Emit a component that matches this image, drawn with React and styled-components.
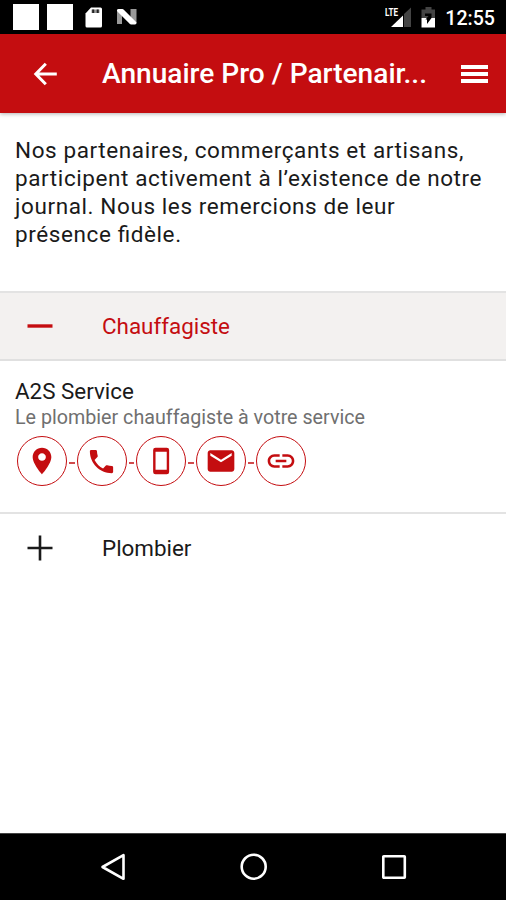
import React from 'react';
import styled, { createGlobalStyle } from 'styled-components';

const RED = '#c40d10';

const contacts = [
  { id: 'place', size: 32, path: 'M12 2C8.13 2 5 5.13 5 9c0 5.25 7 13 7 13s7-7.75 7-13c0-3.87-3.13-7-7-7zm0 9.9c-1.6 0-2.9-1.3-2.9-2.9s1.3-2.9 2.9-2.9 2.9 1.3 2.9 2.9-1.3 2.9-2.9 2.9z' },
  { id: 'call', size: 31, path: 'M6.62 10.79c1.44 2.83 3.76 5.14 6.59 6.59l2.2-2.2c.27-.27.67-.36 1.02-.24 1.12.37 2.33.57 3.57.57.55 0 1 .45 1 1V20c0 .55-.45 1-1 1-9.39 0-17-7.61-17-17 0-.55.45-1 1-1h3.5c.55 0 1 .45 1 1 0 1.25.2 2.45.57 3.57.11.35.03.74-.25 1.02l-2.2 2.2z' },
  { id: 'mobile', size: 32, path: 'M7.9 2h8.4a1.8 1.8 0 0 1 1.8 1.8v16.4a1.8 1.8 0 0 1-1.8 1.8H7.9a1.8 1.8 0 0 1-1.8-1.8V3.8A1.8 1.8 0 0 1 7.9 2zM7.9 5v13.5h8.4V5z' },
  { id: 'mail', size: 32, path: 'M20 4H4c-1.1 0-1.99.9-1.99 2L2 18c0 1.1.9 2 2 2h16c1.1 0 2-.9 2-2V6c0-1.1-.9-2-2-2zm0 4l-8 5-8-5V6l8 5 8-5v2z' },
  { id: 'link', size: 32, path: 'M3.9 12c0-1.71 1.39-3.1 3.1-3.1h4V7H7c-2.76 0-5 2.24-5 5s2.24 5 5 5h4v-1.9H7c-1.71 0-3.1-1.39-3.1-3.1zM8 13h8v-2H8v2zm9-6h-4v1.9h4c1.71 0 3.1 1.39 3.1 3.1s-1.39 3.1-3.1 3.1h-4V17h4c2.76 0 5-2.24 5-5s-2.24-5-5-5z' },
];

const StatusBar = () => (
  <Status>
    <Notifications>
      <Square />
      <Square />
      <svg width="18" height="21" viewBox="0 0 18 21">
        <path d="M6 .5h9.5a1.5 1.5 0 0 1 1.5 1.5v17a1.5 1.5 0 0 1-1.5 1.5H2A1.5 1.5 0 0 1 .5 19V6.5z" fill="#fff" />
        <path d="M6.5 2.5h8V6h-8z" fill="#999" />
        <path d="M8.2 2.5V6M12.7 2.5V6" stroke="#222" strokeWidth="2" />
      </svg>
      <svg width="23" height="18" viewBox="0 0 23 18">
        <path d="M2 1.5h5V16H2zM15.5 1h6v14h-6z" fill="#999" />
        <path d="M3.5 2.5h4L20 15h-4z" fill="#fff" stroke="#fff" strokeWidth="3" strokeLinejoin="round" />
      </svg>
    </Notifications>
    <System>
      <svg width="27" height="22" viewBox="0 0 27 22">
        <path d="M19 8l7-6.500V21h-7z" fill="#444" />
        <path d="M6 21L18 9.5V21z" fill="#fff" />
        <text x="0" y="9.5" textLength="13" lengthAdjust="spacingAndGlyphs" fill="#fff" fontSize="11.5" fontWeight="700">LTE</text>
      </svg>
      <svg width="15" height="21" viewBox="0 0 15 21">
        <path d="M4.5 0h6v2.5H14V11H.5V2.5h4z" fill="#444" />
        <path d="M.5 11H14v9.5H.5z" fill="#fff" />
        <path d="M4 6.5h6.500V11L6 17v-4.500H4.500L7.500 9H4z" fill="#000" />
      </svg>
      <Clock>12:55</Clock>
    </System>
  </Status>
);

const Category = ({ label, open }) => (
  <CategoryRow $open={open}>
    <svg width="26" height="26" viewBox="0 0 26 26" stroke="currentColor" strokeWidth={open ? 3.4 : 2.6}>
      <path d={open ? 'M.5 13h25' : 'M.5 13h25M13 .5v25'} />
    </svg>
    <span>{label}</span>
  </CategoryRow>
);

const App = () => (
  <Screen>
    <GlobalStyle />
    <StatusBar />
    <Header>
      <svg width="24" height="24" viewBox="0 0 24 24" fill="none" stroke="#fff" strokeWidth="3">
        <path d="M23.8 12H3M12.8 1.8L2.8 12l10 10.2" />
      </svg>
      <Title>Annuaire Pro / Partenair...</Title>
      <Menu><i /><i /><i /></Menu>
    </Header>
    <Content>
      <Intro>
        Nos partenaires, commerçants et artisans,<br />
        participent activement à l’existence de notre<br />
        journal. Nous les remercions de leur<br />
        présence fidèle.
      </Intro>
      <Category label="Chauffagiste" open />
      <Partner>
        <Name>A2S Service</Name>
        <Tagline>Le plombier chauffagiste à votre service</Tagline>
        <Contacts>
          {contacts.map(({ id, size, path }, index) => (
            <React.Fragment key={id}>
              {index > 0 ? <Dash /> : ''}
              <ContactButton aria-label={id}>
                <svg width={size} height={size} viewBox="0 0 24 24" fill="currentColor">
                  <path d={path} fillRule="evenodd" />
                </svg>
              </ContactButton>
            </React.Fragment>
          ))}
        </Contacts>
      </Partner>
      <Category label="Plombier" />
    </Content>
    <NavBar>
      <svg width="28" height="28" viewBox="0 0 28 28">
        <path d="M3.5 14L24.5 2.2v23.6z" />
      </svg>
      <svg width="28" height="28" viewBox="0 0 28 28">
        <circle cx="13.7" cy="13.7" r="12" />
      </svg>
      <svg width="28" height="28" viewBox="0 0 28 28">
        <rect x="3.3" y="3.3" width="21.5" height="21.5" rx="0.5" />
      </svg>
    </NavBar>
  </Screen>
);

const GlobalStyle = createGlobalStyle`
  body {
    margin: 0;
    font-family: Roboto, sans-serif;
  }
  * {
    box-sizing: border-box;
  }
  svg {
    display: block;
    flex-shrink: 0;
  }
`;

const Screen = styled.div`
  display: flex;
  flex-direction: column;
  width: 506px;
  height: 900px;
  background: #fff;
  color: #1a1a1a;
`;

const Status = styled.div`
  display: flex;
  align-items: center;
  justify-content: space-between;
  height: 34px;
  padding: 0 11px 0 13px;
  background: #000;
`;

const Notifications = styled.div`
  display: flex;
  align-items: center;
  gap: 8px;
  svg {
    margin-left: 4px;
  }
`;

const Square = styled.div`
  width: 26px;
  height: 26px;
  background: #fff;
`;

const System = styled.div`
  display: flex;
  align-items: center;
  gap: 9px;
`;

const Clock = styled.span`
  color: #fff;
  font-size: 19.6px;
  font-weight: 500;
  line-height: 34px;
  padding-top: 3px;
`;

const Header = styled.header`
  position: relative;
  display: flex;
  align-items: center;
  height: 79px;
  padding: 0 18px 0 33px;
  background: ${RED};
  box-shadow: 0 1px 4px rgba(0, 0, 0, 0.3);
`;

const Title = styled.h1`
  flex: 1;
  margin: 0 0 0 45px;
  color: #fff;
  font-size: 28.1px;
  font-weight: 500;
  white-space: nowrap;
`;

const Menu = styled.div`
  display: flex;
  flex-direction: column;
  gap: 3px;
  width: 27px;
  i {
    height: 4px;
    background: #fff;
  }
`;

const Content = styled.main`
  flex: 1;
`;

const Intro = styled.p`
  height: 178px;
  margin: 0;
  padding: 23px 15px 0;
  font-size: 22.5px;
  line-height: 28.1px;
  letter-spacing: 0.6px;
  font-feature-settings: 'liga' 1;
  white-space: nowrap;
`;

const CategoryRow = styled.div`
  display: flex;
  align-items: center;
  gap: 49px;
  height: 70px;
  padding-left: 27px;
  border-top: 2px solid #e3e3e3;
  border-bottom: ${({ $open }) => ($open ? '2px solid #e0e0e0' : '0')};
  background: ${({ $open }) => ($open ? '#f3f1f0' : '#fff')};
  color: ${({ $open }) => ($open ? RED : '#1a1a1a')};
  font-size: 22.4px;
`;

const Partner = styled.section`
  height: 151px;
  padding: 16px 15px 0;
`;

const Name = styled.div`
  font-size: 22.4px;
  line-height: 28px;
`;

const Tagline = styled.div`
  padding-top: 1px;
  color: #707070;
  font-size: 19.7px;
  line-height: 24px;
`;

const Contacts = styled.div`
  display: flex;
  align-items: center;
  gap: 2px;
  margin: 6px 0 0 2px;
`;

const ContactButton = styled.button`
  display: flex;
  align-items: center;
  justify-content: center;
  width: 50px;
  height: 50px;
  padding: 0;
  border: 1.5px solid ${RED};
  border-radius: 50%;
  background: #fff;
  color: ${RED};
`;

const Dash = styled.span`
  width: 5.7px;
  height: 2px;
  margin-top: 4px;
  background: #d04a4c;
`;

const NavBar = styled.nav`
  display: flex;
  align-items: center;
  justify-content: space-between;
  height: 67px;
  padding: 0 98px 0 99px;
  border-top: 1px solid #444;
  background: #000;
  svg {
    fill: none;
    stroke: #fff;
    stroke-width: 2.6;
    stroke-linejoin: round;
  }
`;

export default App;
